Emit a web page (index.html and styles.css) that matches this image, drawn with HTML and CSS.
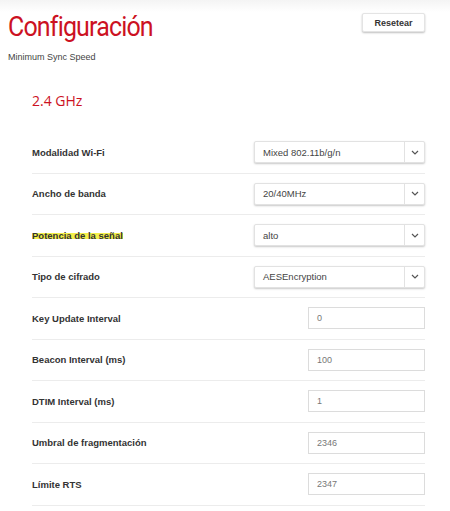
FILE: index.html
```html
<!DOCTYPE html>
<html lang="es">
<head>
<meta charset="utf-8">
<link rel="stylesheet" href="styles.css">
</head>
<body>
<div class="page">
  <div class="header">
    <div class="titles">
      <h1 class="title">Configuración</h1>
      <div class="subtitle">Minimum Sync Speed</div>
    </div>
    <button class="reset">Resetear</button>
  </div>
  <h2 class="band">2.4 GHz</h2>
  <div class="rows">
    <div class="row"><span class="label">Modalidad Wi-Fi</span>
      <div class="select"><span class="sval">Mixed 802.11b/g/n</span><span class="arrow"><svg width="8" height="5" viewBox="0 0 8 5"><path d="M1 1 L4 4 L7 1" fill="none" stroke="#555" stroke-width="1.2"/></svg></span></div></div>
    <div class="row"><span class="label">Ancho de banda</span>
      <div class="select"><span class="sval">20/40MHz</span><span class="arrow"><svg width="8" height="5" viewBox="0 0 8 5"><path d="M1 1 L4 4 L7 1" fill="none" stroke="#555" stroke-width="1.2"/></svg></span></div></div>
    <div class="row"><span class="label hl">Potencia de la señal</span>
      <div class="select"><span class="sval">alto</span><span class="arrow"><svg width="8" height="5" viewBox="0 0 8 5"><path d="M1 1 L4 4 L7 1" fill="none" stroke="#555" stroke-width="1.2"/></svg></span></div></div>
    <div class="row"><span class="label">Tipo de cifrado</span>
      <div class="select"><span class="sval">AESEncryption</span><span class="arrow"><svg width="8" height="5" viewBox="0 0 8 5"><path d="M1 1 L4 4 L7 1" fill="none" stroke="#555" stroke-width="1.2"/></svg></span></div></div>
    <div class="row"><span class="label">Key Update Interval</span><div class="input">0</div></div>
    <div class="row"><span class="label">Beacon Interval (ms)</span><div class="input">100</div></div>
    <div class="row"><span class="label">DTIM Interval (ms)</span><div class="input">1</div></div>
    <div class="row"><span class="label">Umbral de fragmentación</span><div class="input">2346</div></div>
    <div class="row"><span class="label">Límite RTS</span><div class="input">2347</div></div>
  </div>
</div>
</body>
</html>
```
FILE: styles.css
```css
html, body {
  margin: 0;
  padding: 0;
  background: #fff;
}
.page {
  width: 450px;
  font-family: "Liberation Sans", Arial, sans-serif;
  background: linear-gradient(#f4f4f4 0px, #fff 12px);
}
.header {
  display: flex;
  justify-content: space-between;
  align-items: flex-start;
  padding: 10px 25px 0 8px;
}
.title {
  margin: 0;
  font-family: Roboto, sans-serif;
  font-weight: 400;
  font-size: 27px;
  letter-spacing: -0.9px;
  line-height: 34px;
  color: #cc1122;
  transform: scaleX(0.925);
  transform-origin: left center;
}
.subtitle {
  margin-top: 8px;
  font-size: 9px;
  color: #444;
}
.reset {
  margin-top: 3px;
  width: 63px;
  height: 19px;
  border: 1px solid #e4e4e4;
  border-radius: 2px;
  background: #fff;
  box-shadow: 0 1px 2px rgba(0,0,0,0.25);
  font-family: "Liberation Sans", Arial, sans-serif;
  font-weight: 700;
  font-size: 9px;
  color: #333;
  padding: 0;
}
.band {
  margin: 30px 0 0 32px;
  font-family: "Open Sans", sans-serif;
  font-weight: 400;
  font-size: 14px;
  line-height: 18px;
  color: #cc1122;
}
.rows {
  margin: 22px 25px 0 32px;
}
.row {
  height: 41.5px;
  box-sizing: border-box;
  border-bottom: 1px solid #ececec;
  display: flex;
  align-items: center;
  justify-content: space-between;
}
.label {
  font-size: 9.5px;
  font-weight: 700;
  color: #333;
}
.hl {
  background: linear-gradient(transparent 30%, #f3ef4a 30%, #f3ef4a 85%, transparent 85%);
}
.select {
  width: 171px;
  height: 22px;
  box-sizing: border-box;
  border: 1px solid #e2e2e2;
  border-radius: 2px;
  box-shadow: 0 1px 2px rgba(0,0,0,0.22);
  display: flex;
  align-items: center;
  background: #fff;
}
.sval {
  flex: 1;
  padding-left: 8px;
  font-size: 9.5px;
  color: #444;
}
.arrow {
  width: 19px;
  height: 100%;
  border-left: 1px solid #e2e2e2;
  display: flex;
  align-items: center;
  justify-content: center;
}
.input {
  width: 117px;
  height: 22px;
  box-sizing: border-box;
  border: 1px solid #dcdcdc;
  padding-left: 8px;
  display: flex;
  align-items: center;
  font-size: 9px;
  color: #777;
  background: #fff;
}
```
